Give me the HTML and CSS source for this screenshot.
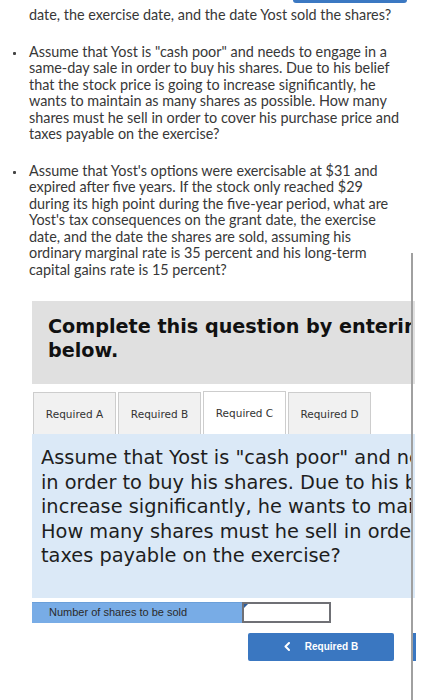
FILE: index.html
```html
<!DOCTYPE html>
<html lang="en">
<head>
<meta charset="utf-8">
<title>Question</title>
<link rel="stylesheet" href="styles.css">
</head>
<body>
<div class="topbar"></div>
<div class="viewport">
  <div class="question">
    <p class="cont">date, the exercise date, and the date Yost sold the shares?</p>
    <div class="item">
      <span class="dot"></span>
      <p>Assume that Yost is "cash poor" and needs to engage in a<br>same-day sale in order to buy his shares. Due to his belief<br>that the stock price is going to increase significantly, he<br>wants to maintain as many shares as possible. How many<br>shares must he sell in order to cover his purchase price and<br>taxes payable on the exercise?</p>
    </div>
    <div class="item">
      <span class="dot"></span>
      <p>Assume that Yost's options were exercisable at $31 and<br>expired after five years. If the stock only reached $29<br>during its high point during the five-year period, what are<br>Yost's tax consequences on the grant date, the exercise<br>date, and the date the shares are sold, assuming his<br>ordinary marginal rate is 35 percent and his long-term<br>capital gains rate is 15 percent?</p>
    </div>
  </div>
  <div class="work">
    <div class="instr">
      <h2>Complete this question by entering your answers in the tabs<br>below.</h2>
    </div>
    <div class="tabs">
      <div class="tab">Required A</div>
      <div class="tab">Required B</div>
      <div class="tab active">Required C</div>
      <div class="tab">Required D</div>
    </div>
    <div class="panel">
      <p>Assume that Yost is "cash poor" and needs to engage in a same-day sale<br>in order to buy his shares. Due to his belief that the stock price is going to<br>increase significantly, he wants to maintain as many shares as possible.<br>How many shares must he sell in order to cover his purchase price and<br>taxes payable on the exercise?</p>
    </div>
  </div>
  <div class="answer">
    <div class="label">Number of shares to be sold</div>
    <div class="input"></div>
  </div>
  <div class="nav">
    <button class="btn" type="button"><svg class="chev" width="6" height="9" viewBox="0 0 6 9"><polyline points="5,1 1.5,4.5 5,8" fill="none" stroke="#fff" stroke-width="2" stroke-linecap="round" stroke-linejoin="round"/></svg><span>Required B</span></button>
    <div class="sliver"></div>
  </div>
</div>
<div class="divider"></div>
</body>
</html>
```
FILE: styles.css
```css
html, body {
  margin: 0;
  padding: 0;
  background: #fff;
}
body {
  position: relative;
  width: 421px;
  height: 700px;
  overflow: hidden;
}
.topbar {
  margin-left: 293px;
  width: 114px;
  height: 3px;
  background: #3b78c2;
  border-radius: 0 0 3px 3px;
}
.viewport {
  width: 416px;
  overflow: hidden;
}
.question {
  padding-top: 4px;
  font-family: Lato, "Open Sans", sans-serif;
  font-size: 14.4px;
  line-height: 16.5px;
  color: #383838;
}
.question p {
  margin: 0;
  white-space: nowrap;
}
.cont {
  padding-left: 29px;
}
.item {
  display: flex;
  margin-top: 20px;
}
.dot {
  flex: none;
  width: 3px;
  height: 3px;
  margin: 8px 13px 0 13px;
  border-radius: 1px;
  background: #444;
}
.work {
  margin-top: 23px;
  margin-left: 32px;
  width: 383px;
  overflow: hidden;
}
.instr {
  background: #e0e0e0;
  padding: 14px 4px 21px 16px;
}
.instr h2 {
  margin: 0;
  overflow: hidden;
  font-family: "DejaVu Sans", Verdana, sans-serif;
  font-weight: bold;
  font-size: 19.2px;
  line-height: 24px;
  color: #111;
  white-space: nowrap;
}
.tabs {
  display: flex;
  align-items: flex-end;
  gap: 2px;
  margin-top: 7px;
  padding-left: 1px;
}
.tab {
  flex: none;
  width: 81px;
  height: 41px;
  border: 1px solid #cdcdcd;
  border-bottom: none;
  background: #f1f1f1;
  display: flex;
  align-items: center;
  justify-content: center;
  font-family: "DejaVu Sans", Verdana, sans-serif;
  font-size: 10.5px;
  color: #333;
}
.tab.active {
  height: 42px;
  background: #fff;
}
.panel {
  background: #dbe9f7;
  padding: 12px 4px 29px 9px;
}
.panel p {
  margin: 0;
  overflow: hidden;
  font-family: "DejaVu Sans", Verdana, sans-serif;
  font-size: 19.35px;
  line-height: 24.5px;
  color: #1e1e1e;
  white-space: nowrap;
}
.answer {
  display: flex;
  height: 21px;
  margin: 4px 0 0 32px;
}
.label {
  box-sizing: border-box;
  width: 210px;
  padding-left: 17px;
  background: #78ace6;
  border-top: 1px solid #6a9fd9;
  font-family: "Liberation Sans", Arial, sans-serif;
  font-size: 11px;
  line-height: 19px;
  color: #2a2a2a;
}
.input {
  position: relative;
  box-sizing: border-box;
  width: 89px;
  border: 2px solid #6f7075;
  background: #fff;
}
.input::before {
  content: "";
  position: absolute;
  top: 0;
  left: 0;
  border-left: 4px solid #2b5c9c;
  border-bottom: 4px solid transparent;
}
.nav {
  display: flex;
  gap: 18px;
  margin-top: 10px;
  padding-left: 248px;
}
.btn {
  display: flex;
  align-items: center;
  justify-content: center;
  gap: 15px;
  width: 146px;
  height: 28px;
  padding: 0;
  border: none;
  border-radius: 2px;
  background: #3a77c1;
  color: #fff;
  font-family: "Liberation Sans", Arial, sans-serif;
  font-weight: bold;
  font-size: 10px;
}
.chev {
  display: block;
}
.sliver {
  flex: none;
  width: 4px;
  height: 28px;
  background: #3a77c1;
}
.divider {
  position: absolute;
  left: 411px;
  top: 253px;
  width: 2px;
  height: 447px;
  background: #a0a0a0;
}
```
